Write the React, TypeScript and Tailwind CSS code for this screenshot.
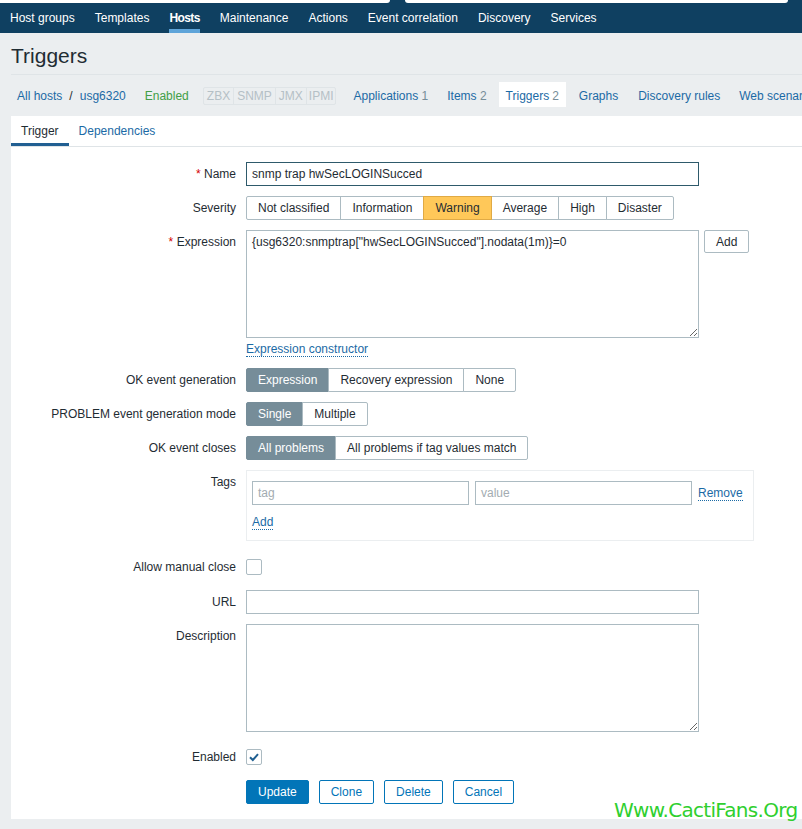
import React from "react";

const navItems = [
  "Host groups",
  "Templates",
  "Hosts",
  "Maintenance",
  "Actions",
  "Event correlation",
  "Discovery",
  "Services",
];

function Label({ text, required }: { text: string; required?: boolean }) {
  return (
    <div className="w-[235px] shrink-0 pr-[10px] text-right leading-[24px]">
      {required && <span className="text-[#d40000]">* </span>}
      {text}
    </div>
  );
}

type SegItem = { label: string; active?: boolean; warning?: boolean };

function Segmented({ items }: { items: SegItem[] }) {
  return (
    <div className="flex">
      {items.map((it, i) => {
        let cls = "bg-white border-[#acbbc2] text-[#1f2c33]";
        if (it.active) cls = "bg-[#768d99] border-[#768d99] text-white";
        if (it.warning) cls = "bg-[#ffc859] border-[#e0aa45] text-[#1f2c33] relative";
        return (
          <div
            key={it.label}
            className={`h-[24px] flex items-center px-[11px] border ${cls} ${i > 0 ? "-ml-px" : ""} ${
              i === 0 ? "rounded-l-[2px]" : ""
            } ${i === items.length - 1 ? "rounded-r-[2px]" : ""}`}
          >
            {it.label}
          </div>
        );
      })}
    </div>
  );
}

function Checkbox({ checked }: { checked?: boolean }) {
  return (
    <div className="w-[16px] h-[16px] border border-[#acbbc2] rounded-[2px] bg-white flex items-center justify-center">
      {checked && (
        <svg width="12" height="12" viewBox="0 0 12 12">
          <path d="M2 6.2 L4.8 9 L10 3.2" fill="none" stroke="#1f5f91" strokeWidth="2" />
        </svg>
      )}
    </div>
  );
}

export default function App() {
  return (
    <div className="w-[802px] min-h-screen overflow-hidden bg-[#ebeef0] text-[12px] text-[#1f2c33] font-['Liberation_Sans',Arial,sans-serif]">
      {/* top strip */}
      <div className="flex h-[3px] bg-[#0f4061]">
        <div className="w-[390px] bg-white rounded-br-[3px]" />
        <div className="w-[15px]" />
        <div className="w-[383px] bg-white rounded-b-[3px]" />
      </div>

      {/* nav */}
      <nav className="flex h-[30px] bg-[#0f4061] pl-[10px] gap-[20px] text-white whitespace-nowrap">
        {navItems.map((n) => (
          <div
            key={n}
            className={`flex items-center pt-[4px] border-b-[4px] ${
              n === "Hosts" ? "border-[#5ea4d9] font-bold tracking-[-0.6px]" : "border-transparent"
            }`}
          >
            {n}
          </div>
        ))}
      </nav>

      {/* title */}
      <div className="ml-[11px] h-[42px] pt-[5px] border-b border-[#dfe4e7] flex items-center text-[21px]">
        Triggers
      </div>

      {/* breadcrumbs */}
      <div className="mt-[7px] h-[25px] flex items-center pl-[17px] whitespace-nowrap text-[#1b6aa5]">
        <div className="flex items-center gap-[7px] pt-[3px]">
          <span>All hosts</span>
          <span className="text-[#1f2c33]">/</span>
          <span>usg6320</span>
        </div>
        <span className="ml-[19px] pt-[3px] text-[#429e47]">Enabled</span>
        <div className="ml-[14px] mt-[3px] flex border border-[#dfe4e7] rounded-[2px] text-[#b5c0c6] h-[18px]">
          <span className="px-[3px] flex items-center">ZBX</span>
          <span className="px-[3px] flex items-center border-l border-[#dfe4e7]">SNMP</span>
          <span className="px-[3px] flex items-center border-l border-[#dfe4e7]">JMX</span>
          <span className="px-[2px] flex items-center border-l border-[#dfe4e7]">IPMI</span>
        </div>
        <span className="ml-[17px] pt-[3px]">
          Applications <span className="text-[#768d99]">1</span>
        </span>
        <span className="ml-[19px] pt-[3px]">
          Items <span className="text-[#768d99]">2</span>
        </span>
        <span className="ml-[12px] h-[25px] px-[7px] pt-[3px] bg-white flex items-center">
          Triggers <span className="ml-[3px] text-[#768d99]">2</span>
        </span>
        <span className="ml-[13px] pt-[3px]">Graphs</span>
        <span className="ml-[20px] pt-[3px]">Discovery rules</span>
        <span className="ml-[19px] pt-[3px]">Web scenarios</span>
      </div>

      {/* form box */}
      <div className="ml-[11px] mt-[9px] bg-white pb-[15px]">
        <div className="flex h-[31px] border-b border-[#dfe4e7]">
          <div className="px-[10px] flex items-center border-b-[3px] border-[#215f92] pt-[3px]">Trigger</div>
          <div className="px-[10px] flex items-center border-b-[3px] border-transparent pt-[3px] text-[#1b6aa5]">
            Dependencies
          </div>
        </div>

        <div className="pt-[15px] flex flex-col">
          <div className="flex">
            <Label text="Name" required />
            <div className="w-[453px] h-[24px] border border-[#2e5a6b] px-[5px] flex items-center">
              snmp trap hwSecLOGINSucced
            </div>
          </div>

          <div className="flex mt-[10px]">
            <Label text="Severity" />
            <Segmented
              items={[
                { label: "Not classified" },
                { label: "Information" },
                { label: "Warning", warning: true },
                { label: "Average" },
                { label: "High" },
                { label: "Disaster" },
              ]}
            />
          </div>

          <div className="flex mt-[10px]">
            <Label text="Expression" required />
            <div className="flex flex-col">
              <div className="flex items-start gap-[5px]">
                <textarea
                  readOnly
                  value={'{usg6320:snmptrap["hwSecLOGINSucced"].nodata(1m)}=0'}
                  className="w-[453px] h-[108px] border border-[#acbbc2] px-[5px] py-[4px] leading-[14px] outline-none resize text-[#1f2c33]"
                />
                <div className="h-[23px] border border-[#acbbc2] rounded-[2px] px-[11px] flex items-center">Add</div>
              </div>
              <div className="mt-[4px] leading-[15px]">
                <span className="text-[#1b6aa5] border-b border-dotted border-[#1b6aa5]">Expression constructor</span>
              </div>
            </div>
          </div>

          <div className="flex mt-[11px]">
            <Label text="OK event generation" />
            <Segmented
              items={[{ label: "Expression", active: true }, { label: "Recovery expression" }, { label: "None" }]}
            />
          </div>

          <div className="flex mt-[10px]">
            <Label text="PROBLEM event generation mode" />
            <Segmented items={[{ label: "Single", active: true }, { label: "Multiple" }]} />
          </div>

          <div className="flex mt-[10px]">
            <Label text="OK event closes" />
            <Segmented
              items={[{ label: "All problems", active: true }, { label: "All problems if tag values match" }]}
            />
          </div>

          <div className="flex mt-[10px]">
            <Label text="Tags" />
            <div className="w-[508px] h-[71px] border border-[#ebeef0] pt-[10px] px-[5px]">
              <div className="flex items-center h-[24px]">
                <div className="w-[217px] h-[24px] border border-[#acbbc2] px-[5px] flex items-center text-[#a3acb1]">
                  tag
                </div>
                <div className="ml-[6px] w-[217px] h-[24px] border border-[#acbbc2] px-[5px] flex items-center text-[#a3acb1]">
                  value
                </div>
                <span className="ml-[6px] text-[#1b6aa5] border-b border-dotted border-[#1b6aa5] leading-[14px]">
                  Remove
                </span>
              </div>
              <div className="mt-[10px] leading-[15px]">
                <span className="text-[#1b6aa5] border-b border-dotted border-[#1b6aa5]">Add</span>
              </div>
            </div>
          </div>

          <div className="flex mt-[14px] h-[24px] items-center">
            <Label text="Allow manual close" />
            <Checkbox />
          </div>

          <div className="flex mt-[11px]">
            <Label text="URL" />
            <div className="w-[453px] h-[24px] border border-[#acbbc2]" />
          </div>

          <div className="flex mt-[10px]">
            <Label text="Description" />
            <textarea
              readOnly
              value=""
              className="w-[453px] h-[108px] border border-[#acbbc2] px-[5px] py-[4px] outline-none resize"
            />
          </div>

          <div className="flex mt-[13px] h-[24px] items-center">
            <Label text="Enabled" />
            <Checkbox checked />
          </div>

          <div className="flex mt-[11px]">
            <div className="w-[235px] shrink-0" />
            <div className="flex gap-[10px]">
              <div className="h-[24px] px-[11px] flex items-center rounded-[2px] bg-[#0275b8] border border-[#0275b8] text-white">
                Update
              </div>
              {["Clone", "Delete", "Cancel"].map((b) => (
                <div
                  key={b}
                  className="h-[24px] px-[11px] flex items-center rounded-[2px] bg-white border border-[#0275b8] text-[#0275b8]"
                >
                  {b}
                </div>
              ))}
            </div>
          </div>
        </div>
      </div>

      {/* watermark */}
      <div className="absolute left-[614px] top-[798px] text-[20px] leading-[24px] text-[#2fcf2f] font-['DejaVu_Sans',sans-serif] tracking-[-0.7px] whitespace-nowrap">
        Www.CactiFans.Org
      </div>
    </div>
  );
}
